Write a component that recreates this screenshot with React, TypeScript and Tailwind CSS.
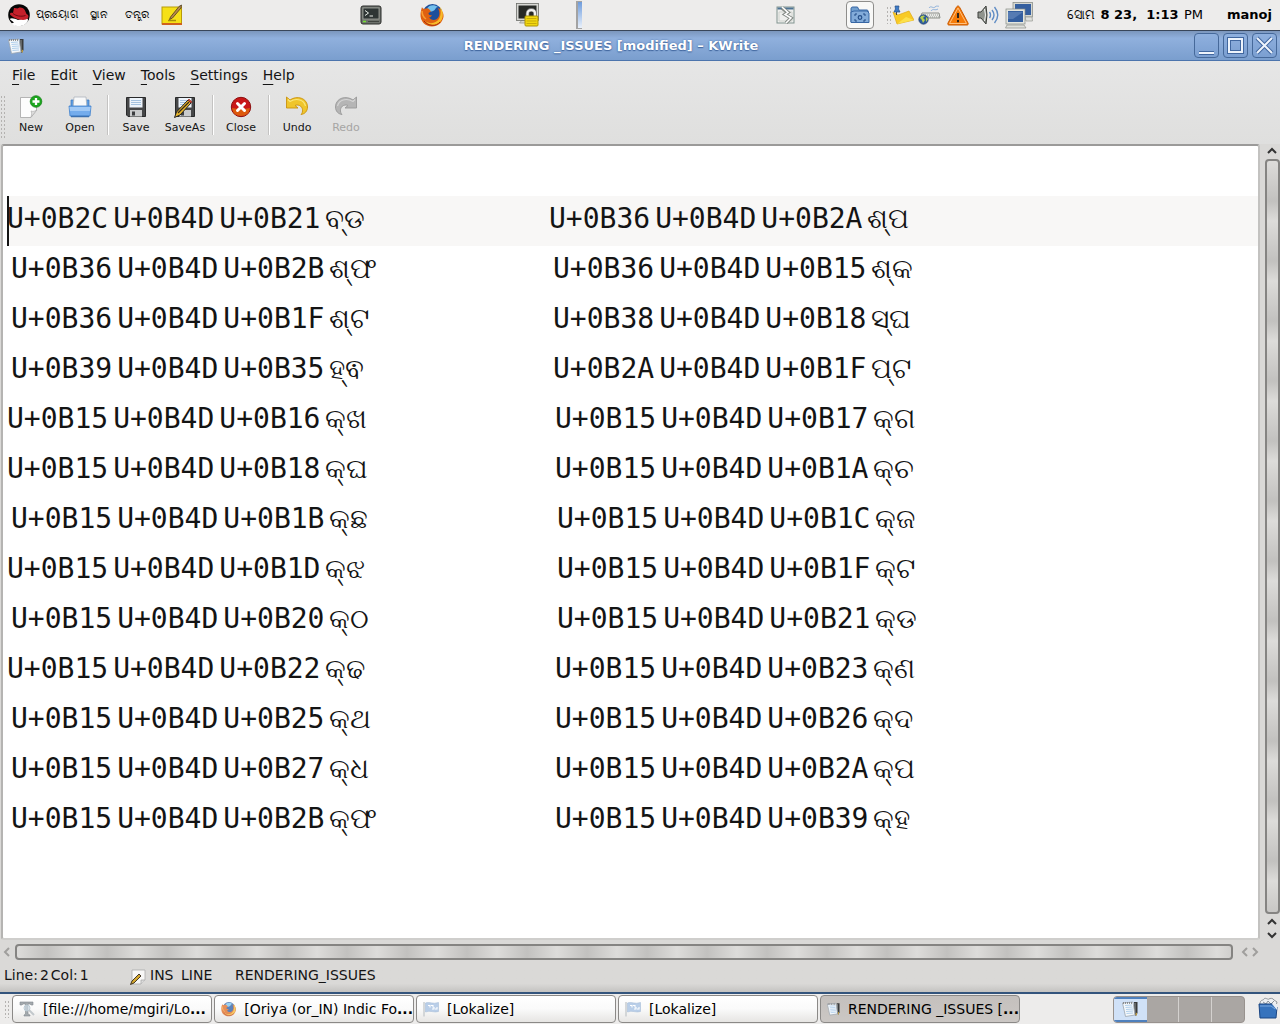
import React, { useState } from 'react';

type IconProps = { className?: string };

const RedHat: React.FC<IconProps> = ({ className }) => (
  <svg className={className} viewBox="0 0 22 22">
    <circle cx="11" cy="11" r="10.8" fill="#050505" />
    <path d="M1.500 15C4 13.500 7 15 10 16L18 14C21 14.500 20.500 17.500 17 20.500C13 23 6 22.500 3.500 19.500L6 18.500Z" fill="#fff" />
    <path d="M6 4C8 4 9 5 10.500 4C12.500 3 16 4 17 6.500L18.500 10C21 11 21.500 14 18 15.500C13 17 5 14 2 10.500C2 8.500 3.500 8.800 5 9Z" fill="#c5202b" />
    <path d="M5 9.500C8 12 13 13 17.500 11.500" stroke="#6b0b12" fill="none" />
  </svg>
);

const NoteIcon: React.FC<IconProps> = ({ className }) => (
  <svg className={className} viewBox="0 0 22 22">
    <rect x="1" y="3" width="19.500" height="17" fill="#f6e017" stroke="#b89b08" />
    <path d="M1 20H21" stroke="#d0601d" strokeWidth="2" />
    <path d="M7 16.500H15" stroke="#a58e09" strokeWidth="1.500" />
    <path d="M9.500 13L18 2.500L20.500 1L20 4L11.500 14L8.500 15.500Z" fill="#b68a4c" stroke="#4c3a1d" strokeWidth=".8" />
  </svg>
);

const TerminalIcon: React.FC<IconProps> = ({ className }) => (
  <svg className={className} viewBox="0 0 22 20">
    <rect x="1" y="1" width="20" height="18" rx="2" fill="#6d716c" stroke="#2b2d2a" />
    <rect x="3" y="3" width="16" height="11" fill="#2e3534" stroke="#a2a69f" strokeWidth=".8" />
    <path d="M5 5.500L8.500 8L5 10.500M9.500 11H13" fill="none" stroke="#e9eee8" />
    <path d="M3 16.500H6" stroke="#74e133" strokeWidth="1.500" />
    <path d="M8 16.500H19" stroke="#40443f" />
  </svg>
);

const Firefox: React.FC<IconProps> = ({ className }) => (
  <svg className={className} viewBox="0 0 24 24">
    <circle cx="12.500" cy="11" r="10" fill="#1d4f9c" />
    <path d="M7 6C8 2 14 1 18 4C15 4 16 7 13 8C11 9 8 9 7 6Z" fill="#72c0ed" />
    <path d="M2 4C2.500 6 3.500 5.500 4.500 6C6 5 8 5 9 6L11 8.500L8.500 10C8.500 12 10 12.500 12 12C11 14.500 9.500 14.500 9 14C11 18 17 18 19 13C20 10 19 7 18 5C22.500 7 24 11 23.500 14C22 20 18 23.500 12 23.500C5 23.500 0 18 .5 11C.7 8 1.500 6 2 4Z" fill="#df6112" />
    <path d="M20 4C24 8 24 16 19 20C14 24 8 22 5 18C10 22 17 20 19.500 15C21 11 21 8 20 4Z" fill="#f8bb28" />
    <path d="M2 8C2 11 3 14 6 16" stroke="#fa9e32" strokeWidth="1.500" fill="none" />
    <path d="M4 18C8 23 16 24 20 19" stroke="#a82810" fill="none" />
  </svg>
);

const LockScreen: React.FC<IconProps> = ({ className }) => (
  <svg className={className} viewBox="0 0 24 24">
    <path d="M6 17H12V20H3.500Z" fill="#d4d4ce" stroke="#8d8e88" strokeWidth=".7" />
    <rect x="1.500" y="1.500" width="20" height="15" fill="#272926" stroke="#d8d8d4" strokeWidth="2" />
    <rect x=".5" y=".5" width="22" height="17" fill="none" stroke="#6b6d69" strokeWidth=".8" />
    <path d="M11.500 14V10.500C11.500 5.500 19 5.500 19 10.500V14" fill="none" stroke="#777" strokeWidth="3.500" />
    <path d="M11.500 14V10.500C11.500 6 19 6 19 10.500V14" fill="none" stroke="#f1f1ef" strokeWidth="2.200" />
    <rect x="9" y="13" width="13" height="10" rx="1" fill="#f2d80e" stroke="#ad9306" />
    <path d="M10.500 15.500H20.500M10.500 18H20.500M10.500 20.500H20.500" stroke="#c9ab06" />
  </svg>
);

const BrokenWindow: React.FC<IconProps> = ({ className }) => (
  <svg className={className} viewBox="0 0 19 18">
    <rect x="1" y="1" width="17" height="16" fill="#eeefed" stroke="#81938f" />
    <path d="M1.500 2.500H17.500" stroke="#4e7392" strokeWidth="2" />
    <path d="M3 6H16V15H3Z" fill="none" stroke="#d0d3ce" />
    <path d="M6 2L12 6.500L9 8.500L15 12L10 17" fill="none" stroke="#858b86" strokeWidth="3.500" />
    <path d="M6 1L12 6.500L9 8.500L15 12L10 17" fill="none" stroke="#fff" strokeWidth="1.500" />
  </svg>
);

const FolderShot: React.FC<IconProps> = ({ className }) => (
  <svg className={className} viewBox="0 0 20 18">
    <path d="M1 15V3C1 1.500 1.500 1 3 1H7.500L9 4H17.500L18.500 6V16H1Z" fill="#719fcf" stroke="#3766a4" />
    <path d="M1 6L4 5H17L19 7V16.500H1Z" fill="#82abd9" stroke="#3766a4" />
    <path d="M5 10V8H7M13 8H15V10M15 13V15H13M7 15H5V13" fill="none" stroke="#234d87" />
    <circle cx="10" cy="11.500" r="1.800" fill="none" stroke="#234d87" strokeWidth="1.200" />
  </svg>
);

const PinnedNote: React.FC<IconProps> = ({ className }) => (
  <svg className={className} viewBox="0 0 22 20">
    <path d="M1 7L6 10L17 6L22 15L5 19Z" fill="#f8ca25" stroke="#e0a816" strokeWidth=".7" />
    <path d="M5 19L14 12L22 15Z" fill="#fce04a" />
    <path d="M4.500 5V10" stroke="#444" />
    <path d="M3 1H7L6.500 4L8 7H2L3.500 4Z" fill="#3c7bc8" stroke="#244d87" strokeWidth=".7" />
  </svg>
);

const KeyboardGlobe: React.FC<IconProps> = ({ className }) => (
  <svg className={className} viewBox="0 0 23 20">
    <path d="M11 3C13 0 15 4 17 2S20 2 21 1M13 6C15 3 17 6 20 4" stroke="#8eb1db" fill="none" />
    <path d="M4 8H21L22 13H2Z" fill="#e8e9e6" stroke="#8d908a" />
    <path d="M5 10H20M4 12H21" stroke="#969a94" strokeDasharray="1 1" />
    <circle cx="5.500" cy="14.500" r="4.700" fill="#2f5d9e" stroke="#1c3e70" strokeWidth=".7" />
    <path d="M2 13C3 10 6 10 7 11L5 13L7 15L5 18C4 16 4 14 2 13ZM8 12L10 14L8 17Z" fill="#b7cd4c" />
  </svg>
);

const Warning: React.FC<IconProps> = ({ className }) => (
  <svg className={className} viewBox="0 0 22 21">
    <path d="M11 1C12 1 12.500 2 13 3L21 18C21.500 19.500 21 20 20 20H2C1 20 .5 19.500 1 18L9 3C9.500 2 10 1 11 1Z" fill="#f57b09" stroke="#c95a04" />
    <path d="M11 3L19.500 18.500H2.500Z" fill="none" stroke="#ffc180" />
    <path d="M11 8V13M11 15V17.200" stroke="#30251c" strokeWidth="2" />
  </svg>
);

const Volume: React.FC<IconProps> = ({ className }) => (
  <svg className={className} viewBox="0 0 22 20">
    <path d="M1 7H4L9 1Q11 10 9 19L4 13H1Z" fill="#8f938d" stroke="#3c3f3b" />
    <path d="M7.500 4Q9.500 10 7.500 16" fill="none" stroke="#f3f3f2" />
    <path d="M12.500 7Q14.500 10 12.500 13M15 5Q19 10 15 15M17.500 2Q24 10 17.500 18" fill="none" stroke="#5f8cc4" strokeWidth="1.400" />
  </svg>
);

const NetworkIcon: React.FC<IconProps> = ({ className }) => (
  <svg className={className} viewBox="0 0 28 27">
    <rect x="9" y="1" width="18" height="13" fill="#355f9f" stroke="#d6d8d2" strokeWidth="2" />
    <rect x="8" y=".5" width="19.500" height="14.500" fill="none" stroke="#858983" strokeWidth=".7" />
    <path d="M20 15H27L27.500 19H21Z" fill="#dfe0dc" stroke="#979993" strokeWidth=".7" />
    <rect x="2" y="8" width="17" height="13" fill="#355f9f" stroke="#e4e6e0" strokeWidth="2" />
    <rect x="1" y="7" width="19" height="15" fill="none" stroke="#858983" strokeWidth=".7" />
    <path d="M3 10H18L8 17H3Z" fill="#567bb3" />
    <path d="M2 23H19L21 26H.5Z" fill="#dfe0dc" stroke="#8e918a" strokeWidth=".7" />
  </svg>
);

const KWriteIcon: React.FC<IconProps> = ({ className }) => (
  <svg className={className} viewBox="0 0 16 16">
    <path d="M12 1H15.500V12L14 15L12 13Z" fill="#383a3b" />
    <path d="M13 2V12" stroke="#8e9295" />
    <path d="M13 13L15 11.500L14.500 15Z" fill="#d8ac3d" />
    <path d="M.5 2L11 1L13 14L3.500 15.500Z" fill="#f3f7fb" stroke="#9aa5af" strokeWidth=".8" />
    <path d="M3 4.500L10 4M3.500 6.500L10.500 6M4 8.500L11 8M4 10.500L11 10M4.500 12.500L11 12" stroke="#a9cbea" strokeWidth=".9" />
    <path d="M1 2H11" stroke="#777" strokeDasharray="1 1" strokeWidth="1.500" />
  </svg>
);

const NewDoc: React.FC<IconProps> = ({ className }) => (
  <svg className={className} viewBox="0 0 24 24">
    <path d="M1.500 2.500H17.500V15L12 22.500H1.500Z" fill="#fdfdfd" stroke="#a4a4a4" strokeWidth=".8" />
    <path d="M12 22C13 19 12.500 17 12 16C14 17 16 16 18 15Z" fill="#ddd" stroke="#aaa" strokeWidth=".6" />
    <circle cx="17" cy="6.500" r="5.800" fill="#1ca51e" stroke="#087d0c" strokeWidth=".7" />
    <path d="M17 3V10M13.500 6.500H20.500" stroke="#fff" strokeWidth="2.300" />
  </svg>
);

const OpenDoc: React.FC<IconProps> = ({ className }) => (
  <svg className={className} viewBox="0 0 24 24">
    <path d="M3 11V5H21V13H3Z" fill="#5e9de0" stroke="#3b76bd" strokeWidth=".7" />
    <path d="M6 2H18L19 13H5Z" fill="#f8f9fa" stroke="#adb4bc" strokeWidth=".8" />
    <path d="M1 11H23L22 21H2Z" fill="#74acec" stroke="#3f80cc" strokeWidth=".8" />
    <path d="M1.500 12H22.500L22 16H2Z" fill="#a1c9f5" />
    <path d="M3 21.500H21" stroke="#3b70b0" strokeWidth="1.500" />
  </svg>
);

const Floppy: React.FC<IconProps & { pencil?: boolean }> = ({ className, pencil }) => (
  <svg className={className} viewBox="0 0 24 24">
    <path d="M2.500 2.500H21.500V21.500H4L2.500 20Z" fill="#464748" stroke="#292a2b" />
    <rect x="5.500" y="3" width="13" height="9.500" fill="#edf4fb" />
    <path d="M7 5.500H17M7 7.500H17M7 9.500H17" stroke="#a5c2df" />
    <rect x="6" y="15" width="12" height="6.500" fill="#c9cbcc" />
    <rect x="8" y="16.500" width="3" height="4" fill="#3b3d3f" />
    {pencil && (
      <>
        <path d="M1.500 22.500L3.500 17L15 5L18 8L7 20Z" fill="#e9b72c" stroke="#222" />
        <path d="M5 18L16 7" stroke="#33291c" strokeWidth="1.200" />
        <path d="M15 5L16 4L19 7L18 8Z" fill="#d94b37" stroke="#8c261b" strokeWidth=".6" />
      </>
    )}
  </svg>
);

const CloseIcon: React.FC<IconProps> = ({ className }) => (
  <svg className={className} viewBox="0 0 24 24">
    <circle cx="12" cy="12" r="9.700" fill="#c81717" stroke="#8d0e0e" />
    <path d="M3 13Q12 15 21 13Q20 21 12 21Q4 21 3 13Z" fill="#dc5a0d" />
    <path d="M8.500 8.500L15.500 15.500M15.500 8.500L8.500 15.500" stroke="#fff" strokeWidth="3" strokeLinecap="round" />
  </svg>
);

const UndoIcon: React.FC<IconProps & { redo?: boolean }> = ({ className, redo }) => (
  <svg className={className} viewBox="0 0 24 24">
    <g transform={redo ? 'translate(24 0) scale(-1 1)' : undefined}>
      <path
        d="M1.500 2L5 5C12 0 22.500 3 22.500 12C22.500 16 20 19 16 19.500C18.500 17 18 12 14.500 10.500C12.500 9.700 11 10 10 10.500L13 13H1.500Z"
        fill={redo ? '#b5b5b5' : '#efc52c'}
        stroke={redo ? '#999' : '#c9920d'}
        strokeWidth=".9"
      />
      <path d="M3 4.500L5 6.500C12 2.500 19 5 20.500 11" fill="none" stroke={redo ? '#d5d5d5' : '#fae77b'} strokeWidth="1.200" />
    </g>
  </svg>
);

const EditMode: React.FC<IconProps> = ({ className }) => (
  <svg className={className} viewBox="0 0 16 16">
    <path d="M2 1H15V11L11 15H2Z" fill="#f7f7f6" stroke="#aaa" strokeWidth=".8" />
    <path d="M15 11H11V15" fill="#ddd" stroke="#aaa" strokeWidth=".8" />
    <path d="M.5 15.500L2 12L9 5L11 7L4 14Z" fill="#d2a62d" stroke="#33291c" strokeWidth=".9" />
  </svg>
);

const ToolIcon: React.FC<IconProps> = ({ className }) => (
  <svg className={className} viewBox="0 0 16 16">
    <path d="M1 1H14V4H12L11 3H9V13L11 14V15H5V14L6.500 13V3H4L3 4H1Z" fill="#a3a9ad" stroke="#858c90" strokeWidth=".6" />
    <circle cx="8" cy="7" r="3" fill="#d4e3ed" fillOpacity=".6" stroke="#bccbd5" />
    <path d="M10 9L15 14" stroke="#c2c8cc" strokeWidth="2" />
  </svg>
);

const FlagIcon: React.FC<IconProps> = ({ className }) => (
  <svg className={className} viewBox="0 0 16 16">
    <path d="M1 1V15.500" stroke="#c9cccf" strokeWidth="1.500" />
    <path d="M2.500 2C6 .5 10 3.500 15.500 1.500V10.500C11 12 7 9 2.500 11Z" fill="#b9cee8" stroke="#a7bdd9" strokeWidth=".6" />
    <path d="M5 4.500H7V6.500M8 4.500H10V6.500M9 8H11V6M12 8H14V6" fill="none" stroke="#fff" strokeWidth="1.100" />
  </svg>
);

const TrashFolder: React.FC<IconProps> = ({ className }) => (
  <svg className={className} viewBox="0 0 22 24">
    <path d="M3 6C4 2 6 4 7 2S11 3 12 2S16 1 17 3L20 5L19 9H3Z" fill="#eef0f2" stroke="#7b8287" strokeWidth=".8" />
    <path d="M6 5L9 7L11 4L14 7L17 4" fill="none" stroke="#8a9299" />
    <path d="M2 7H15L20 10L19 21H3Z" fill="#3673bd" stroke="#1b4683" />
    <path d="M3 9H14L18 12" stroke="#78a8de" fill="none" />
    <path d="M15 7L20 7L20 13Z" fill="#e8edf3" />
  </svg>
);

const Chevron: React.FC<{ d: string; stroke: string }> = ({ d, stroke }) => (
  <svg className="h-2.5 w-2.5" viewBox="0 0 10 10">
    <path d={d} fill="none" stroke={stroke} strokeWidth="2" />
  </svg>
);

const UP = 'M1 7L5 3L9 7';
const DOWN = 'M1 3L5 7L9 3';
const LEFT = 'M7 1L3 5L7 9';
const RIGHT = 'M3 1L7 5L3 9';

type Entry = { indent: string; codes: string[]; glyph: string };
type Row = [Entry, Entry];

const entry = (indent: string, first: string, last: string, glyph: string): Entry => ({
  indent,
  codes: ['U+' + first, 'U+0B4D', 'U+' + last],
  glyph,
});

const rows: Row[] = [
  [entry('pl-0', '0B2C', '0B21', 'ବ୍‌ଡ'), entry('pl-0', '0B36', '0B2A', 'ଶ୍‌ପ')],
  [entry('pl-1', '0B36', '0B2B', 'ଶ୍‌ଫ'), entry('pl-1', '0B36', '0B15', 'ଶ୍‌କ')],
  [entry('pl-1', '0B36', '0B1F', 'ଶ୍‌ଟ'), entry('pl-1', '0B38', '0B18', 'ସ୍‌ଘ')],
  [entry('pl-1', '0B39', '0B35', 'ହ୍‌ଵ'), entry('pl-1', '0B2A', '0B1F', 'ପ୍‌ଟ')],
  [entry('pl-0', '0B15', '0B16', 'କ୍‌ଖ'), entry('pl-1.5', '0B15', '0B17', 'କ୍‌ଗ')],
  [entry('pl-0', '0B15', '0B18', 'କ୍‌ଘ'), entry('pl-1.5', '0B15', '0B1A', 'କ୍‌ଚ')],
  [entry('pl-1', '0B15', '0B1B', 'କ୍‌ଛ'), entry('pl-2', '0B15', '0B1C', 'କ୍‌ଜ')],
  [entry('pl-0', '0B15', '0B1D', 'କ୍‌ଝ'), entry('pl-2', '0B15', '0B1F', 'କ୍‌ଟ')],
  [entry('pl-1', '0B15', '0B20', 'କ୍‌ଠ'), entry('pl-2', '0B15', '0B21', 'କ୍‌ଡ')],
  [entry('pl-0', '0B15', '0B22', 'କ୍‌ଢ'), entry('pl-1.5', '0B15', '0B23', 'କ୍‌ଣ')],
  [entry('pl-1', '0B15', '0B25', 'କ୍‌ଥ'), entry('pl-1.5', '0B15', '0B26', 'କ୍‌ଦ')],
  [entry('pl-1', '0B15', '0B27', 'କ୍‌ଧ'), entry('pl-1.5', '0B15', '0B2A', 'କ୍‌ପ')],
  [entry('pl-1', '0B15', '0B2B', 'କ୍‌ଫ'), entry('pl-1.5', '0B15', '0B39', 'କ୍‌ହ')],
];

const menus = ['File', 'Edit', 'View', 'Tools', 'Settings', 'Help'];

const EntryText: React.FC<{ item: Entry }> = ({ item }) => (
  <span className={`flex gap-[5px] ${item.indent}`}>
    {item.codes.map((code, i) => (
      <span key={i}>{code}</span>
    ))}
    <span>{item.glyph}</span>
  </span>
);

const ToolButton: React.FC<{ label: string; disabled?: boolean; children: React.ReactNode }> = ({ label, disabled, children }) => (
  <button disabled={disabled} className="flex w-12 flex-col items-center gap-[3px] text-[11px] leading-3 disabled:text-[#a6a5a4]">
    {children}
    {label}
  </button>
);

const ToolSeparator = () => (
  <div className="flex w-1.5 justify-center">
    <div className="h-10 w-0.5 border-r border-white bg-[#c4c3c2]" />
  </div>
);

const Grip: React.FC<{ className: string }> = ({ className }) => (
  <div className={`bg-[radial-gradient(circle,#b4b2b0_1px,transparent_1px)] bg-[length:3px_4px] ${className}`} />
);

const TitleButton: React.FC<{ label: string; d: string }> = ({ label, d }) => (
  <button
    aria-label={label}
    className="flex h-[25px] w-[25px] items-center justify-center rounded border border-[#46699a] bg-linear-to-b from-[#8fb0de] to-[#7b9fd1]"
  >
    <svg className="h-[21px] w-[21px]" viewBox="0 0 21 21" fill="none">
      <path d={d} stroke="#41679f" strokeWidth="4" />
      <path d={d} stroke="#eef4fc" strokeWidth="2" />
    </svg>
  </button>
);

const App: React.FC = () => {
  const [activeTask, setActiveTask] = useState(4);
  const currentLine = 0;

  const tasks = [
    { label: '[file:///home/mgiri/Lo', more: true, icon: <ToolIcon className="h-4 w-4" /> },
    { label: '[Oriya (or_IN) Indic Fo', more: true, icon: <Firefox className="h-4 w-4 opacity-70" /> },
    { label: '[Lokalize]', more: false, icon: <FlagIcon className="h-4 w-4" /> },
    { label: '[Lokalize]', more: false, icon: <FlagIcon className="h-4 w-4" /> },
    { label: 'RENDERING _ISSUES [', more: true, icon: <KWriteIcon className="h-4 w-4" /> },
  ];

  return (
    <div className="flex min-h-screen flex-col bg-[#dad9d7] font-['DejaVu_Sans',sans-serif] text-[#141414]">
      {/* Desktop panel */}
      <header className="flex h-[30px] items-center justify-between bg-[#edeceb] text-black">
        <div className="flex items-center pl-2">
          <RedHat className="h-[22px] w-[22px]" />
          <button className="ml-1.5 w-[54px] text-left text-[11px] leading-6">ପ୍ରୟୋଗ</button>
          <button className="w-[35px] text-left text-[11px] leading-6">ସ୍ଥାନ</button>
          <button className="w-9 text-left text-[11px] leading-6">ତନ୍ତ୍ର</button>
          <NoteIcon className="h-[22px] w-[22px]" />
          <TerminalIcon className="ml-[177px] h-5 w-[22px]" />
          <Firefox className="ml-[38px] h-6 w-6" />
          <LockScreen className="ml-[72px] h-6 w-6" />
          <div className="ml-9 h-7 w-1.5 border-y border-l-2 border-[#a3a3a3] bg-linear-to-b from-[#6f9cdb] to-[#eaf1fb]" />
        </div>
        <div className="flex items-center pr-2">
          <BrokenWindow className="mr-[51px] h-[18px] w-[19px]" />
          <button aria-label="Screenshots" className="mr-3 flex h-7 w-7 items-center justify-center rounded border border-[#8e8d8b] bg-[#f8f8f7]">
            <FolderShot className="h-[18px] w-5" />
          </button>
          <Grip className="h-[18px] w-1.5" />
          <PinnedNote className="mr-1 h-5 w-[22px]" />
          <KeyboardGlobe className="mr-1.5 h-5 w-[23px]" />
          <Warning className="mr-2 h-[21px] w-[22px]" />
          <Volume className="mr-1.5 h-5 w-[22px]" />
          <NetworkIcon className="mr-[34px] h-[27px] w-7" />
          <button className="mr-6 flex w-[136px] items-baseline justify-between text-[13px] leading-6 whitespace-pre">
            <span>ସୋମ</span>
            <b>8 23,  1:13</b>
            <span>PM</span>
          </button>
          <button className="text-[13px] leading-6 font-bold">manoj</button>
        </div>
      </header>

      {/* Window title */}
      <div className="flex h-[31px] items-center border-t border-b border-t-[#39465a] border-b-[#4b74ad] bg-linear-to-b from-[#7b96bd] via-[#90b0dd] via-25% to-[#7a9ece] pr-[3px] pl-2">
        <KWriteIcon className="h-4 w-4" />
        <h1 className="flex-1 pl-1 text-center text-[13px] font-bold text-white [text-shadow:0_1px_1px_#41679f,0_0_2px_#41679f]">
          RENDERING _ISSUES [modified] – KWrite
        </h1>
        <div className="flex gap-1">
          <TitleButton label="Minimize" d="M3 18H18" />
          <TitleButton label="Maximize" d="M4 4H17V17H4Z" />
          <TitleButton label="Close window" d="M3 3L18 18M18 3L3 18" />
        </div>
      </div>

      {/* Menus and toolbar */}
      <div className="bg-linear-to-b from-[#e6e6e6] to-[#dfdfde]">
        <nav className="flex h-7 items-center gap-[15px] pl-3 text-sm">
          {menus.map((menu) => (
            <button key={menu}>
              <span className="underline decoration-1 underline-offset-4">{menu[0]}</span>
              {menu.slice(1)}
            </button>
          ))}
        </nav>
        <div className="flex h-[55px] items-start gap-px pt-1.5">
          <Grip className="h-11 w-1.5" />
          <ToolButton label="New"><NewDoc className="h-6 w-6" /></ToolButton>
          <ToolButton label="Open"><OpenDoc className="h-6 w-6" /></ToolButton>
          <ToolSeparator />
          <ToolButton label="Save"><Floppy className="h-6 w-6" /></ToolButton>
          <ToolButton label="SaveAs"><Floppy pencil className="h-6 w-6" /></ToolButton>
          <ToolSeparator />
          <ToolButton label="Close"><CloseIcon className="h-6 w-6" /></ToolButton>
          <ToolSeparator />
          <ToolButton label="Undo"><UndoIcon className="h-6 w-6" /></ToolButton>
          <ToolButton label="Redo" disabled><UndoIcon redo className="h-6 w-6" /></ToolButton>
        </div>
      </div>

      {/* Document */}
      <main className="flex flex-1">
        <div
          role="textbox"
          aria-multiline="true"
          aria-label="Document"
          contentEditable
          suppressContentEditableWarning
          className="ml-px flex-1 rounded-[3px] border-2 border-t-[#9b9a99] border-r-[#c3c2c0] border-b-[#cfcecc] border-l-[#b5b4b2] bg-white pt-[50px] font-['DejaVu_Sans_Mono','Noto_Sans',monospace] text-[28px] leading-[46px] outline-none"
        >
          {rows.map(([left, right], i) => (
            <div
              key={i}
              className={`relative ml-1 grid h-[50px] grid-cols-[542px_1fr] whitespace-nowrap ${i === currentLine ? 'bg-[#f8f7f6]' : ''}`}
            >
              {i === currentLine && <div className="absolute inset-y-0 left-0 w-0.5 bg-[#141414]" />}
              <EntryText item={left} />
              <EntryText item={right} />
            </div>
          ))}
        </div>
        <div className="flex w-5 flex-col items-center gap-[3px] pt-0.5 pl-1">
          <Chevron d={UP} stroke="#333" />
          <div className="w-[15px] flex-1 rounded border-2 border-[#858482] bg-[repeating-linear-gradient(180deg,#dddcda_0px,#c2c1bf_40px,#dddcda_60px)]" />
          <Chevron d={UP} stroke="#333" />
          <Chevron d={DOWN} stroke="#333" />
        </div>
      </main>
      <div className="flex h-6 items-center gap-[3px] pr-5 pl-0.5">
        <Chevron d={LEFT} stroke="#a09f9d" />
        <div className="h-4 flex-1 rounded border-2 border-[#858482] bg-[repeating-linear-gradient(90deg,#dddcda_0px,#c2c1bf_30px,#dddcda_60px)]" />
        <span className="flex pl-1">
          <Chevron d={LEFT} stroke="#a09f9d" />
          <Chevron d={RIGHT} stroke="#a09f9d" />
        </span>
      </div>

      {/* Status */}
      <footer className="flex h-7 items-start bg-linear-to-b from-[#dad9d7] from-70% to-[#c4c3c1] pt-px pl-1 text-sm leading-5">
        <span className="flex w-[126px] gap-0.5">
          <span>Line:</span>
          <span>2</span>
          <span>Col:</span>
          <span>1</span>
        </span>
        <EditMode className="mt-1 mr-1 h-4 w-4" />
        <span className="w-[31px]">INS</span>
        <span className="w-[54px]">LINE</span>
        <span>RENDERING_ISSUES</span>
      </footer>

      {/* Task list */}
      <div className="flex h-8 items-center border-t-2 border-[#33547c] bg-[#edeceb] pl-1 text-sm text-black">
        <Grip className="mr-0.5 h-[18px] w-1.5" />
        <div className="flex flex-1 gap-0.5">
          {tasks.map((task, i) => (
            <button
              key={i}
              onClick={() => setActiveTask(i)}
              className={`flex h-7 w-[200px] items-center gap-2 rounded border border-[#8b8987] pl-1.5 whitespace-nowrap ${
                i === activeTask ? 'bg-linear-to-b from-[#c4c0bd] to-[#cbc7c4]' : 'bg-linear-to-b from-white via-[#fafafa] to-[#e6e5e3]'
              }`}
            >
              {task.icon}
              <span>
                {task.label}
                {task.more && <b>...</b>}
              </span>
            </button>
          ))}
        </div>
        <div className="mr-3 grid h-[27px] w-[132px] grid-cols-4 overflow-hidden rounded border border-[#98928e] bg-[#aaa6a3]">
          <button aria-label="Workspace 1" className="flex items-center justify-center border-y-2 border-[#4f80bd] bg-[#d0e1f7]">
            <KWriteIcon className="h-4 w-4" />
          </button>
          <button aria-label="Workspace 2" className="border-r border-[#d4d1cf]" />
          <button aria-label="Workspace 3" className="border-r border-[#d4d1cf]" />
          <button aria-label="Workspace 4" />
        </div>
        <TrashFolder className="mr-px h-6 w-[22px]" />
      </div>
    </div>
  );
};

export default App;
